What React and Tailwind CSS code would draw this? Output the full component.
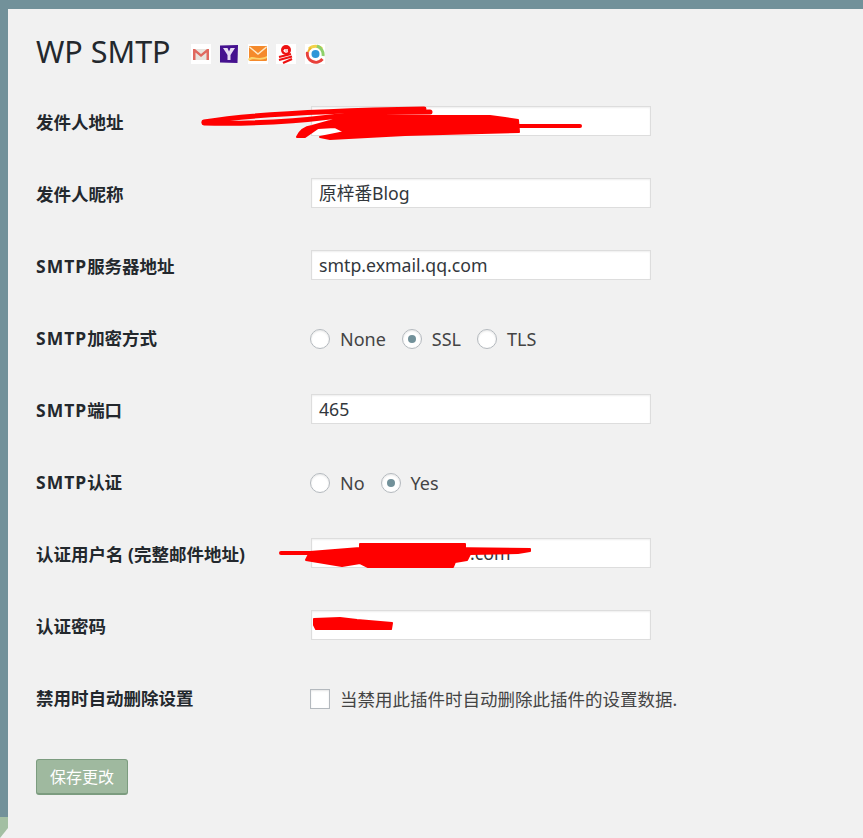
import React from "react";

function Label({ children }) {
  return <div className="w-[275px] shrink-0 self-start text-[17.5px] leading-[32px] font-bold text-[#23282d]">{children}</div>;
}

function Smtp() {
  return <span className="tracking-[1px]">SMTP</span>;
}

function TextRow({ label, value, inset }) {
  return (
    <div className="flex h-[30px] items-center">
      <Label>{label}</Label>
      <div className={`flex h-[30px] w-[340px] items-center border border-[#dddddd] bg-white text-[17.7px] text-[#32373c] shadow-[inset_0_1px_2px_rgba(0,0,0,0.07)] ${inset ? "pl-[158px]" : "pl-[7px]"}`}>
        {value}
      </div>
    </div>
  );
}

function Radio({ checked, label }) {
  return (
    <div className="flex items-center">
      <span className="flex h-5 w-5 items-center justify-center rounded-full border border-[#b4b9be] bg-white shadow-[inset_0_1px_2px_rgba(0,0,0,0.1)]">
        {checked && <span className="h-2 w-2 rounded-full bg-[#72919a]" />}
      </span>
      <span className="ml-[10px] text-[18px] text-[#444444]">{label}</span>
    </div>
  );
}

function RadioRow({ label, items }) {
  return (
    <div className="flex h-[30px] items-center">
      <Label>{label}</Label>
      <div className="-ml-px flex items-center gap-4 pt-1">
        {items.map((i) => (
          <Radio key={i.label} label={i.label} checked={i.checked} />
        ))}
      </div>
    </div>
  );
}

function Icons() {
  return (
    <div className="ml-5 mt-[13px] flex h-5 items-center gap-[8.5px]">
      <svg width="20" height="20" viewBox="0 0 20 20">
        <rect width="20" height="20" fill="#fff" />
        <rect x="2" y="5" width="16" height="11" fill="#e8e4de" />
        <path d="M2 16V5h2l6 5 6-5h2v11h-2.500V8.500L10 13 4.500 8.500V16z" fill="#e0685e" />
      </svg>
      <svg width="20" height="20" viewBox="0 0 20 20">
        <path d="M1 1.500 19 1 18.500 19 1 18.500z" fill="#45118f" />
        <path d="M4 4h4.500L10 7.500 11.500 4H16L11.500 11v5h-3v-5z" fill="#e6dcf2" />
      </svg>
      <svg width="20" height="20" viewBox="0 0 20 20">
        <rect width="20" height="20" fill="#fff" />
        <rect x="1" y="2" width="18" height="15" rx="1" fill="#f58a2c" />
        <path d="M1.500 3 10 10 18.500 3" fill="none" stroke="#fde9c8" strokeWidth="1.500" />
        <path d="M0 15c5-5 9 2 19-3v2c-7 4-13-1-18 3z" fill="#fbd36c" />
      </svg>
      <svg width="20" height="20" viewBox="0 0 20 20">
        <rect width="20" height="20" fill="#fff" />
        <circle cx="10" cy="6" r="5" fill="#ee1111" />
        <path d="M8 6h4M8 6c0 2 2 2.500 4 1.500" stroke="#fff" strokeWidth="1.300" fill="none" />
        <path d="M3 13l12-3M3 16l13-3.500M7 19l9-4" stroke="#ee1111" strokeWidth="2.200" fill="none" />
      </svg>
      <svg width="20" height="20" viewBox="0 0 20 20">
        <rect width="20" height="20" fill="#fff" />
        <path d="M4 5a9 9 0 0 1 13 0" stroke="#f2d24a" strokeWidth="3" fill="none" />
        <path d="M12 2a9 9 0 0 1 6 10" stroke="#8fd06a" strokeWidth="3" fill="none" />
        <path d="M2.500 8a8.500 8.500 0 0 0 15 7" stroke="#e8403a" strokeWidth="3" fill="none" />
        <path d="M3 8a8 8 0 0 1 3-4" stroke="#f0b030" strokeWidth="2" fill="none" />
        <circle cx="10.500" cy="10" r="4" fill="#2f96d8" />
      </svg>
    </div>
  );
}

function Scribbles() {
  return (
    <svg className="pointer-events-none absolute left-0 top-0" width="863" height="838" viewBox="0 0 863 838">
      <g fill="#ff0000" stroke="#ff0000" strokeLinecap="round" strokeLinejoin="round">
        <path d="M204 122C240 116 300 111 424 109" strokeWidth="5" fill="none" />
        <path d="M204 123C250 124 290 122 330 117C370 112 400 112 430 112" strokeWidth="5" fill="none" />
        <path d="M297 137C300 130 305 127 312 126L330 121L345 116L490 116L505 118L518 120L519 132L405 135L330 139L320 137L345 132L335 127L318 128L305 137Z" strokeWidth="2" />
        <path d="M515 126H580" strokeWidth="4" fill="none" />
        <path d="M281 553H340" strokeWidth="4" fill="none" />
        <path d="M306 560L310 552L360 548L360 544L465 544L465 547L447 548L530 549L530 551L518 553L470 554L467 560L455 562L453 567L368 567L360 563L342 566Z" strokeWidth="2" />
        <path d="M314 619L340 618L357 620L392 623L391 629L316 629L314 625Z" strokeWidth="2" />
      </g>
    </svg>
  );
}

export default function App() {
  return (
    <div
      className="relative h-[838px] w-[863px] overflow-hidden bg-[#72919a]"
      style={{ fontFamily: '"Noto Sans", "Noto Sans CJK SC", sans-serif' }}
    >
      <div className="absolute bottom-0 left-0 h-[21px] w-2 bg-[#f1f1f1]">
        <div className="h-full w-full bg-[#a3bfa3] [clip-path:polygon(0_0,100%_0,100%_11px,0_100%)]" />
      </div>
      <div className="ml-2 mt-[9px] h-[829px] bg-[#f1f1f1] pl-7">
        <div className="flex h-[97px] pt-[22px]">
          <h1 className="text-[30.5px] leading-[40px] text-[#23282d]">WP SMTP</h1>
          <Icons />
        </div>
        <div className="flex flex-col gap-[42px]">
          <TextRow label="发件人地址" value="" />
          <TextRow label="发件人昵称" value="原梓番Blog" />
          <TextRow label={<><Smtp />服务器地址</>} value="smtp.exmail.qq.com" />
          <RadioRow
            label={<><Smtp />加密方式</>}
            items={[{ label: "None" }, { label: "SSL", checked: true }, { label: "TLS" }]}
          />
          <TextRow label={<><Smtp />端口</>} value="465" />
          <RadioRow label={<><Smtp />认证</>} items={[{ label: "No" }, { label: "Yes", checked: true }]} />
          <TextRow label="认证用户名 (完整邮件地址)" value=".com" inset />
          <TextRow label="认证密码" value="" />
          <div className="flex h-[30px] items-center">
            <Label>禁用时自动删除设置</Label>
            <div className="-ml-px flex items-center pt-1">
              <span className="h-5 w-5 border border-[#b4b9be] bg-white shadow-[inset_0_1px_2px_rgba(0,0,0,0.1)]" />
              <span className="ml-[10px] text-[17.5px] text-[#444444]">当禁用此插件时自动删除此插件的设置数据.</span>
            </div>
          </div>
        </div>
        <button className="mt-[47px] h-9 w-[92px] rounded-[3px] border border-b-2 border-[#7c9c7f] bg-[#9fb99f] text-[16px] text-white">
          保存更改
        </button>
      </div>
      <Scribbles />
    </div>
  );
}
